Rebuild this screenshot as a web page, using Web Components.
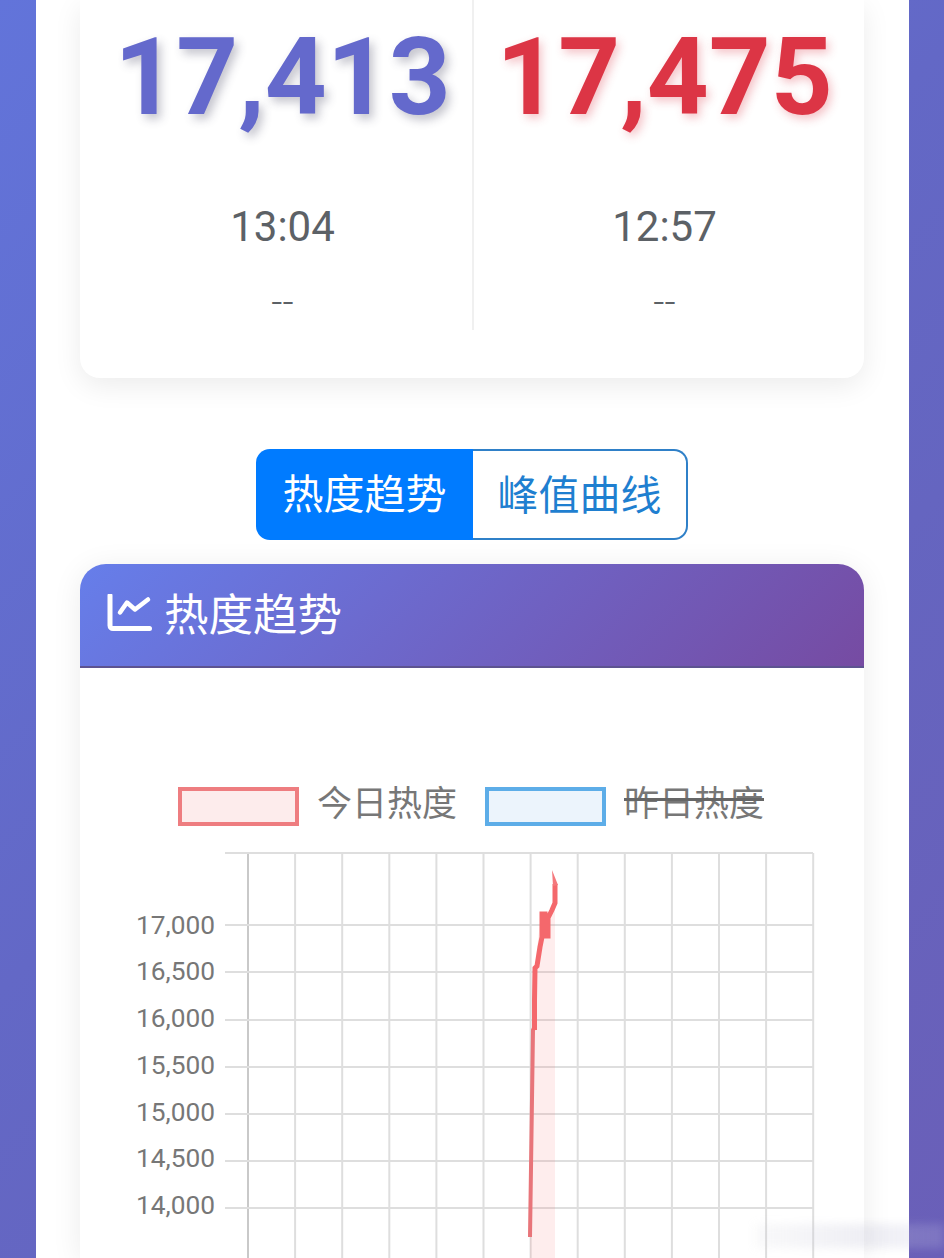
<!DOCTYPE html>
<html lang="zh">
<head>
<meta charset="utf-8">
<title>热度趋势</title>
<style>
  html, body { margin: 0; height: 1258px; overflow: hidden; }
  body {
    background: linear-gradient(135deg, #6274da 0%, #6368c6 45%, #6565c0 65%, #6a5fb8 100%);
    font-family: Roboto, "Noto Sans CJK SC", sans-serif;
    position: relative;
  }
</style>
</head>
<body>
<page-shell>
  <stat-card>
    <stat-col number="17,413" time="13:04" color="#6469cc" shadow="4px 5px 10px rgba(60,60,90,.3)"></stat-col>
    <stat-col number="17,475" time="12:57" color="#dc3545" shadow="3px 4px 10px rgba(220,53,69,.3)" divider="none"></stat-col>
  </stat-card>
  <toggle-group>
    <toggle-btn active>热度趋势</toggle-btn>
    <toggle-btn>峰值曲线</toggle-btn>
  </toggle-group>
  <trend-card>
    <svg slot="icon" width="46" height="42" viewBox="0 0 46 42" fill="none" stroke="#fff" stroke-linecap="round" stroke-linejoin="round">
      <path d="M4 1.5V31.5a3 3 0 0 0 3 3H43.5" stroke-width="5"/>
      <path d="M14 18.5L21 8.5L29 15.5L42 5.5" stroke-width="4.5"/>
    </svg>
    <span slot="title">热度趋势</span>
    <chart-legend></chart-legend>
    <trend-chart></trend-chart>
  </trend-card>
</page-shell>
<blur-mark></blur-mark>

<script>
const shellTemplate = document.createElement("template");
shellTemplate.innerHTML = `
  <style>
    :host {
      display: block;
      width: 873px;
      height: 1258px;
      margin-left: 36px;
      box-sizing: border-box;
      padding-right: 45px;
      padding-left: 44px;
      background: #fff;
      overflow: hidden;
    }
  </style>
  <slot></slot>
`;
class PageShell extends HTMLElement {
  constructor() {
    super();
    this.attachShadow({ mode: "open" }).appendChild(shellTemplate.content.cloneNode(true));
  }
}
customElements.define("page-shell", PageShell);

const statCardTemplate = document.createElement("template");
statCardTemplate.innerHTML = `
  <style>
    :host {
      display: grid;
      grid-template-columns: 381px 381px;
      box-sizing: border-box;
      height: 378px;
      padding: 0 9px 48px 13px;
      background: #fff;
      border-radius: 0 0 20px 20px;
      box-shadow: 0 8px 28px rgba(0,0,0,.08);
    }
  </style>
  <slot></slot>
`;
class StatCard extends HTMLElement {
  constructor() {
    super();
    this.attachShadow({ mode: "open" }).appendChild(statCardTemplate.content.cloneNode(true));
  }
}
customElements.define("stat-card", StatCard);

const statColTemplate = document.createElement("template");
statColTemplate.innerHTML = `
  <style>
    :host {
      display: flex;
      flex-direction: column;
      align-items: center;
      border-right: 2px solid #f0f0f0;
    }
    .num {
      font: 700 108px/130px Roboto, sans-serif;
      margin-top: 12px;
      white-space: nowrap;
    }
    .time {
      font: 400 42px/50px Roboto, sans-serif;
      color: #5c6166;
      margin-top: 60px;
    }
    .delta {
      font: 300 39px/34px Roboto, sans-serif;
      color: #5c6166;
      margin-top: 33px;
    }
  </style>
  <div class="num"></div>
  <div class="time"></div>
  <div class="delta">--</div>
`;
class StatCol extends HTMLElement {
  constructor() {
    super();
    const root = this.attachShadow({ mode: "open" });
    root.appendChild(statColTemplate.content.cloneNode(true));
    const num = root.querySelector(".num");
    num.textContent = this.getAttribute("number");
    num.style.color = this.getAttribute("color");
    num.style.textShadow = this.getAttribute("shadow");
    root.querySelector(".time").textContent = this.getAttribute("time");
    if (this.getAttribute("divider") === "none") this.style.borderRight = "none";
  }
}
customElements.define("stat-col", StatCol);

const toggleGroupTemplate = document.createElement("template");
toggleGroupTemplate.innerHTML = `
  <style>
    :host {
      display: flex;
      width: 784px;
      box-sizing: border-box;
      padding-left: 176px;
      margin-top: 71px;
      margin-bottom: 24px;
    }
  </style>
  <slot></slot>
`;
class ToggleGroup extends HTMLElement {
  constructor() {
    super();
    this.attachShadow({ mode: "open" }).appendChild(toggleGroupTemplate.content.cloneNode(true));
  }
}
customElements.define("toggle-group", ToggleGroup);

const toggleBtnTemplate = document.createElement("template");
toggleBtnTemplate.innerHTML = `
  <style>
    :host {
      display: block;
      box-sizing: border-box;
      width: 215px;
      height: 91px;
      border: 2px solid #2f80c8;
      border-left: none;
      border-radius: 0 14px 14px 0;
      background: #fff;
      color: #1f7fd0;
      font: 400 41px/83px "Noto Sans CJK SC", sans-serif;
      text-align: center;
    }
    :host([active]) {
      width: 217px;
      border: none;
      border-radius: 14px 0 0 14px;
      background: #007bff;
      color: #fff;
      line-height: 85px;
    }
  </style>
  <slot></slot>
`;
class ToggleBtn extends HTMLElement {
  constructor() {
    super();
    this.attachShadow({ mode: "open" }).appendChild(toggleBtnTemplate.content.cloneNode(true));
  }
}
customElements.define("toggle-btn", ToggleBtn);

const trendCardTemplate = document.createElement("template");
trendCardTemplate.innerHTML = `
  <style>
    :host {
      display: block;
      width: 784px;
      border-radius: 26px 26px 0 0;
      background: #fff;
      box-shadow: 0 4px 30px rgba(0,0,0,.08);
    }
    header {
      display: flex;
      align-items: center;
      gap: 12px;
      box-sizing: border-box;
      height: 104px;
      padding-left: 26px;
      border-radius: 26px 26px 0 0;
      border-bottom: 2px solid #5d5390;
      background: linear-gradient(135deg, #667eea 0%, #764ba2 100%);
      color: #fff;
      font: 400 44.5px/60px "Noto Sans CJK SC", sans-serif;
    }
    ::slotted([slot="title"]) { margin-top: -7px; }
    .body { padding-top: 118px; }
  </style>
  <header><slot name="icon"></slot><slot name="title"></slot></header>
  <div class="body"><slot></slot></div>
`;
class TrendCard extends HTMLElement {
  constructor() {
    super();
    this.attachShadow({ mode: "open" }).appendChild(trendCardTemplate.content.cloneNode(true));
  }
}
customElements.define("trend-card", TrendCard);

const legendTemplate = document.createElement("template");
legendTemplate.innerHTML = `
  <style>
    :host {
      display: flex;
      align-items: center;
      height: 40px;
      padding-left: 98px;
      color: #777;
      font: 400 35px/40px "Noto Sans CJK SC", sans-serif;
    }
    .box {
      box-sizing: border-box;
      width: 121px;
      height: 39px;
      border: 4px solid;
      margin-right: 18px;
    }
    .today { background: #fdecec; border-color: #ee7d80; }
    .yesterday { background: #ecf4fc; border-color: #5dade8; margin-left: 28px; }
    .label { margin-bottom: 10px; }
    s { text-decoration: none; position: relative; display: block; }
    s::after {
      content: "";
      position: absolute;
      left: 0;
      right: 0;
      top: 17px;
      height: 3px;
      background: #666;
    }
  </style>
  <span class="box today"></span><span class="label">今日热度</span>
  <span class="box yesterday"></span><s class="label">昨日热度</s>
`;
class ChartLegend extends HTMLElement {
  constructor() {
    super();
    this.attachShadow({ mode: "open" }).appendChild(legendTemplate.content.cloneNode(true));
  }
}
customElements.define("chart-legend", ChartLegend);

// plot is drawn in page coordinates, viewBox starts where the svg sits
const LOWER = "530,1237 533,1030 535,1026";
const UPPER = "534.5,1030 534.5,1000 535,968 537,966 540,947 542,937 542,914 545,914 545,936 548,936 548,918 552,910 555,903 555,884";
const AREA = "530,1258 530,1237 533,1030 535,968 541,913 549,916 555,903 555,1258";

class TrendChart extends HTMLElement {
  constructor() {
    super();
    const xs = [];
    for (let i = 0; i < 13; i++) xs.push(248 + i * 47.1);
    const ys = [853, 925, 972, 1020, 1067, 1114, 1161, 1208];
    // label baselines drift a little above their grid lines, as in the source chart
    const labels = {
      925: ["17,000", 934], 972: ["16,500", 980], 1020: ["16,000", 1027], 1067: ["15,500", 1074],
      1114: ["15,000", 1121], 1161: ["14,500", 1167], 1208: ["14,000", 1214]
    };
    let grid = "";
    xs.forEach((x, i) => {
      grid += `<line x1="${x}" y1="853" x2="${x}" y2="1258" stroke="${i === 0 ? "#c9c9c9" : "#dedede"}" stroke-width="2"/>`;
    });
    ys.forEach(y => {
      grid += `<line x1="225" y1="${y}" x2="813" y2="${y}" stroke="#dedede" stroke-width="2"/>`;
      if (labels[y]) grid += `<text x="215" y="${labels[y][1]}" text-anchor="end">${labels[y][0]}</text>`;
    });
    this.attachShadow({ mode: "open" }).innerHTML = `
      <style>
        :host { display: block; margin-top: 24px; height: 408px; }
        svg { display: block; }
        text { font: 400 26.3px Roboto, sans-serif; fill: #777; }
      </style>
      <svg width="784" height="408" viewBox="80 850 784 408">
        ${grid}
        <polygon points="${AREA}" fill="rgba(245,108,108,.12)"/>
        <polyline points="${LOWER}" fill="none" stroke="#e8757a" stroke-width="4"/>
        <polyline points="${UPPER}" fill="none" stroke="#f4686c" stroke-width="5" stroke-linejoin="miter"/>
        <polygon points="552,870 558,885 553,886" fill="#f4787c"/>
      </svg>
    `;
  }
}
customElements.define("trend-chart", TrendChart);

// the smudged-out watermark in the bottom right corner
class BlurMark extends HTMLElement {
  constructor() {
    super();
    this.attachShadow({ mode: "open" }).innerHTML = `
      <style>
        :host { position: absolute; left: 755px; top: 1224px; width: 189px; height: 24px; pointer-events: none; }
        div {
          width: 100%;
          height: 100%;
          background: linear-gradient(90deg, rgba(200,200,210,.1), rgba(195,195,215,.28) 60%, rgba(205,205,235,.2));
          filter: blur(4px);
        }
      </style>
      <div></div>
    `;
  }
}
customElements.define("blur-mark", BlurMark);
</script>
</body>
</html>
